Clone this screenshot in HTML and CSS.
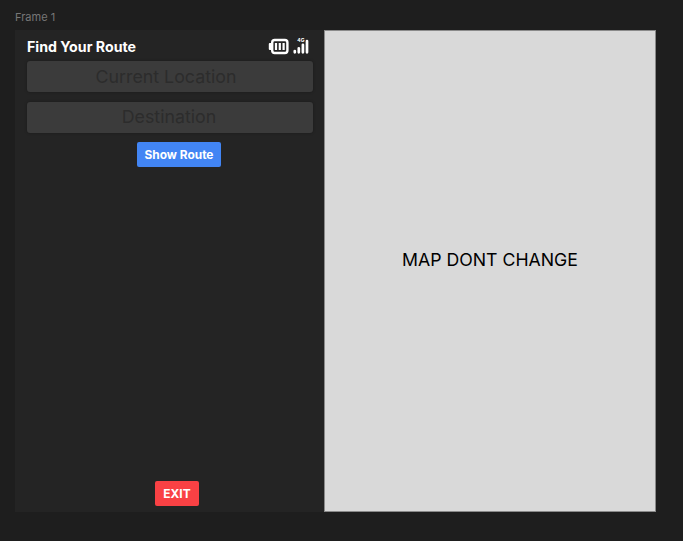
FILE: index.html
```html
<!DOCTYPE html>
<html lang="en">
<head>
<meta charset="utf-8">
<title>Find Your Route</title>
<link rel="stylesheet" href="styles.css">
</head>
<body>
<div class="frame-label">Frame 1</div>
<main class="frame">
  <section class="panel">
    <header class="header">
      <h1 class="title">Find Your Route</h1>
      <div class="status">
        <svg class="battery" width="21" height="18" viewBox="0 0 21 18">
          <path d="M4 7H1.8v5H4" fill="#fff" stroke="#fff" stroke-width="2" stroke-linejoin="round"/>
          <rect x="4.2" y="3" width="15.2" height="13" rx="2.5" fill="none" stroke="#fff" stroke-width="2.4"/>
          <path d="M8 6v7M11.8 6v7M15.6 6v7" stroke="#fff" stroke-width="2.2"/>
        </svg>
        <svg class="signal" width="16" height="18" viewBox="0 0 16 18">
          <path d="M1.8 14v1.3M5.8 11.3v4M9.9 7.8v7.5M14 4v11.3" stroke="#fff" stroke-width="2.7" stroke-linecap="round"/>
          <text class="network" x="4.3" y="4.5">4G</text>
        </svg>
      </div>
    </header>
    <div class="field origin">Current Location</div>
    <div class="field destination">Destination</div>
    <button class="button show">Show Route</button>
    <button class="button exit">EXIT</button>
  </section>
  <section class="map">MAP DONT CHANGE</section>
</main>
</body>
</html>
```

FILE: styles.css
```css
* {
  box-sizing: border-box;
}

body {
  margin: 0;
  height: 541px;
  padding: 10px 27px 0 15px;
  overflow: hidden;
  background: #1e1e1e;
  font-family: Inter, sans-serif;
}

.frame-label {
  height: 20px;
  font-size: 11px;
  line-height: 14px;
  color: #777;
}

.frame {
  display: flex;
  width: 641px;
  height: 482px;
}

.panel {
  display: flex;
  flex-direction: column;
  align-items: center;
  width: 309px;
  padding: 0 11px 6px 12px;
  background: #242424;
}

.header {
  display: flex;
  justify-content: space-between;
  width: 100%;
  height: 31px;
  padding: 7px 4px 0 0;
}

.title {
  margin: 0;
  font-size: 14.2px;
  font-weight: 700;
  line-height: 20px;
  color: #fff;
}

.status {
  display: flex;
  gap: 4px;
}

.network {
  font-size: 5px;
  font-weight: 700;
  fill: #fff;
}

.field {
  width: 286px;
  height: 31px;
  border-radius: 3px;
  background: #3b3b3b;
  box-shadow: 0 0 3px rgba(0, 0, 0, 0.3);
  font-size: 17.8px;
  line-height: 31px;
  text-align: center;
  color: #2c2c2c;
}

.origin {
  margin-bottom: 10px;
  padding-right: 8px;
}

.destination {
  margin-bottom: 9px;
  padding-right: 2px;
  line-height: 30px;
}

.button {
  height: 25px;
  padding: 0;
  border: 0;
  border-radius: 2px;
  font: 700 11.9px/25px Inter, sans-serif;
  color: #fff;
}

.show {
  width: 84px;
  margin-left: 18px;
  background: #4285f4;
}

.exit {
  width: 44px;
  margin-top: auto;
  margin-left: 14px;
  background: #f94144;
}

.map {
  display: flex;
  align-items: center;
  justify-content: center;
  width: 332px;
  padding-bottom: 23px;
  border: 1px solid #8a8a8a;
  background: #d9d9d9;
  font-size: 17.7px;
  color: #000;
}
```
